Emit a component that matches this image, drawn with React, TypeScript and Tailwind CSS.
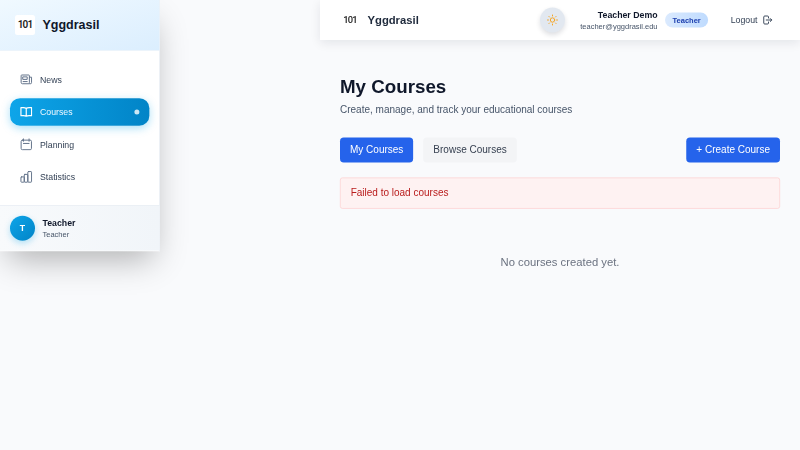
import React from 'react';

type IconProps = { className?: string; children: React.ReactNode };

function Icon({ className = '', children }: IconProps) {
  return (
    <svg
      viewBox="0 0 20 20"
      fill="none"
      stroke="currentColor"
      strokeWidth="1.6"
      strokeLinecap="round"
      strokeLinejoin="round"
      className={`shrink-0 ${className}`}
    >
      {children}
    </svg>
  );
}

const items = [
  {
    label: 'News',
    icon: (
      <>
        <path d="M15 17H4a2.200 2.200 0 0 1-2.200-2.200V4a1 1 0 0 1 1-1H14a1 1 0 0 1 1 1v11.200a1.700 1.700 0 0 0 3.500 0V6.500H15" />
        <path d="M5 6h6.500v4H5zM5 13.500h6.500" />
      </>
    ),
  },
  {
    label: 'Courses',
    icon: (
      <path
        strokeWidth="1.9"
        d="M10 4.500C8.800 3.500 7.300 3.200 5.500 3.200H1.500V16h4c1.800 0 3.300.2 4.500 1 1.200-.8 2.700-1 4.500-1h4V3.200h-4C12.700 3.200 11.200 3.500 10 4.500zm0 0V17"
      />
    ),
  },
  {
    label: 'Planning',
    icon: (
      <>
        <rect x="1.800" y="3.200" width="16.500" height="15.300" rx="2" />
        <path d="M5.500 1v4M14.500 1v4M5.500 8.500h9" />
      </>
    ),
  },
  {
    label: 'Statistics',
    icon: (
      <>
        <rect x="1.500" y="10" width="5.300" height="8.500" rx="1" />
        <rect x="6.800" y="6" width="5.700" height="12.500" rx="1" />
        <rect x="12.500" y="1.500" width="6" height="17" rx="1" />
      </>
    ),
  },
];

function LogoMark({ className = '' }: { className?: string }) {
  return (
    <div
      className={`flex size-8 shrink-0 items-center justify-center rounded bg-white font-['Roboto',sans-serif] leading-none text-[#222] ${className}`}
    >
      101
    </div>
  );
}

function Sidebar() {
  return (
    <aside className="h-[402px] w-64 shrink-0 border-r border-[#e2e8f0] bg-white shadow-[0_25px_50px_-12px_rgba(0,0,0,0.3)]">
      <div className="flex h-[81px] items-center gap-3 border-b border-[#e0edf8] bg-gradient-to-br from-[#f0f9ff] to-[#dbeefe] pl-6">
        <LogoMark className="text-[16px] font-semibold tracking-[-1.4px]" />
        <span className="text-xl font-bold text-[#0f172a]">Yggdrasil</span>
      </div>
      <nav className="flex h-[247px] flex-col gap-2 px-4 pt-6">
        {items.map((item) => {
          const active = item.label === 'Courses';
          return (
            <a
              key={item.label}
              className={`flex h-11 items-center gap-3 rounded-2xl px-4 text-sm ${
                active
                  ? 'bg-gradient-to-r from-[#0ea5e9] to-[#0284c7] text-[#f0f9ff] shadow-[0_4px_14px_rgba(14,165,233,0.35)]'
                  : 'text-[#334155]'
              }`}
            >
              <Icon className={`size-5 ${active ? 'text-white' : 'text-[#64748b]'}`}>{item.icon}</Icon>
              {item.label}
              {active && <span className="ml-auto size-2 rounded-full bg-white/80" />}
            </a>
          );
        })}
      </nav>
      <div className="flex h-[73px] items-center gap-3 border-t border-[#e2e8f0] bg-gradient-to-r from-[#f8fafc] to-[#f1f5f9] px-4">
        <div className="flex size-10 items-center justify-center rounded-full bg-gradient-to-br from-[#0ea5e9] to-[#0284c7] text-sm font-bold text-white shadow-[0_4px_10px_rgba(14,165,233,0.3)]">
          T
        </div>
        <div>
          <div className="text-sm font-bold leading-5 text-[#0f172a]">Teacher</div>
          <div className="text-xs leading-4 text-[#475569]">Teacher</div>
        </div>
      </div>
    </aside>
  );
}

function Header() {
  return (
    <header className="flex h-16 items-center bg-white px-8 shadow-[0_5px_16px_rgba(15,23,42,0.09)]">
      <LogoMark className="text-[15px] font-medium tracking-[-1.2px]" />
      <span className="ml-3 text-lg font-bold text-[#1e293b]">Yggdrasil</span>
      <div className="ml-auto flex size-10 items-center justify-center rounded-full bg-[#e2e8f0] text-[#f5a524] shadow-[0_4px_8px_rgba(15,23,42,0.14)]">
        <Icon className="size-5">
          <circle cx="10" cy="10" r="3.500" />
          <path d="M10 2v1.500M10 16.500V18M2 10h1.500M16.500 10H18M4.300 4.300l1 1M14.700 14.700l1 1M4.300 15.700l1-1M14.700 5.300l1-1" />
        </Icon>
      </div>
      <div className="ml-6 text-right">
        <div className="text-sm font-bold leading-5 text-[#0f172a]">Teacher Demo</div>
        <div className="text-xs leading-4 text-[#475569]">teacher@yggdrasil.edu</div>
      </div>
      <span className="ml-3 flex h-6 items-center rounded-full bg-gradient-to-r from-[#dbeafe] to-[#bfdbfe] px-3 text-xs font-bold text-[#1e40af]">
        Teacher
      </span>
      <button className="ml-9 mr-3 flex items-center gap-2 text-sm text-[#334155]">
        Logout
        <Icon className="size-4">
          <path
            strokeWidth="1.900"
            d="M12 6V4a2 2 0 0 0-2-2H4.500a2 2 0 0 0-2 2v12a2 2 0 0 0 2 2H10a2 2 0 0 0 2-2v-2M7.500 10h11M15.500 7l3 3-3 3"
          />
        </Icon>
      </button>
    </header>
  );
}

export default function App() {
  return (
    <div className="h-[450px] w-[800px] overflow-hidden bg-[#f9fafc]">
      <div className="flex h-[720px] w-[1280px] origin-top-left scale-[0.625] items-start justify-between font-['Liberation_Sans',Arial,sans-serif]">
        <Sidebar />
        <div className="w-[768px]">
          <Header />
          <main className="px-8 pt-14">
            <h1 className="text-3xl font-bold leading-9 text-[#0f172a]">My Courses</h1>
            <p className="mt-2 text-base text-[#475569]">Create, manage, and track your educational courses</p>
            <div className="mt-8 flex h-10 text-base">
              <button className="rounded-md bg-[#2563eb] px-4 text-white">My Courses</button>
              <button className="ml-4 rounded-md bg-[#f3f4f6] px-4 text-[#374151]">Browse Courses</button>
              <button className="ml-auto rounded-md bg-[#2563eb] px-4 text-white">+ Create Course</button>
            </div>
            <div className="mt-6 flex h-[50px] items-center rounded border border-[#fecaca] bg-[#fef2f2] px-4 text-base text-[#b91c1c]">
              Failed to load courses
            </div>
            <p className="mt-[72px] text-center text-lg text-[#6b7280]">No courses created yet.</p>
          </main>
        </div>
      </div>
    </div>
  );
}
